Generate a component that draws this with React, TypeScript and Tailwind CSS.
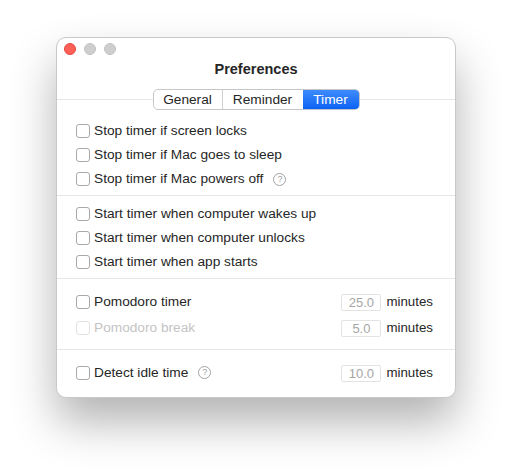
import React from "react";

const font = { fontFamily: '"Liberation Sans", Arial, sans-serif' };

const Check = ({ label, disabled }: { label: string; disabled?: boolean }) => (
  <div className="flex items-center gap-[4px]">
    <span
      className={`w-[14px] h-[14px] rounded-[3px] border bg-white ${
        disabled ? "border-[#e2e2e2]" : "border-[#a9a9a9]"
      }`}
    />
    <span className={disabled ? "text-[#c4c4c4]" : "text-[#262626]"}>{label}</span>
  </div>
);

const Help = () => (
  <span className="ml-[10px] w-[13px] h-[13px] rounded-full border border-[#a3a3a3] text-[#9d9d9d] text-[9px] leading-none flex items-center justify-center">
    ?
  </span>
);

const Minutes = ({ value }: { value: string }) => (
  <div className="flex items-center gap-[5px]">
    <span className="w-[40px] h-[17px] border border-[#e3e3e3] rounded-[2px] text-[#a6a6a6] text-[13px] flex items-center justify-center leading-none">
      {value}
    </span>
    <span className="text-[#262626] text-[13.3px]">minutes</span>
  </div>
);

export default function App() {
  return (
    <div className="w-[512px] h-[472px] bg-white pt-[37px] pl-[56px] text-[13.7px]" style={font}>
      <div className="w-[400px] h-[361px] bg-white rounded-[10px] border border-[#c9c9c9] shadow-[0_24px_45px_rgba(0,0,0,0.3)] flex flex-col overflow-hidden">
        <div className="h-[51px] flex flex-col">
          <div className="flex gap-[8px] pl-[7px] pt-[5px]">
            <span className="w-[12px] h-[12px] rounded-full bg-[#fe5f57] border border-[#e2463f]" />
            <span className="w-[12px] h-[12px] rounded-full bg-[#cecece] border border-[#c2c2c2]" />
            <span className="w-[12px] h-[12px] rounded-full bg-[#cecece] border border-[#c2c2c2]" />
          </div>
          <div className="text-center font-bold text-[14.5px] text-[#262626] mt-[6px] leading-[16px]">Preferences</div>
        </div>

        <div className="flex items-center h-[21px]">
          <div className="flex-1 h-px bg-[#e6e6e6]" />
          <div className="flex h-[21px] rounded-[5px] border border-[#c6c6c6] overflow-hidden leading-none">
            <span className="w-[69px] flex items-center justify-center text-[#262626] border-r border-[#d0d0d0]">General</span>
            <span className="w-[80px] flex items-center justify-center text-[#262626]">Reminder</span>
            <span className="w-[56px] flex items-center justify-center text-white bg-gradient-to-b from-[#3d8bfd] to-[#0a62f3]">Timer</span>
          </div>
          <div className="flex-1 h-px bg-[#e6e6e6]" />
        </div>

        <div className="pt-[9px] pb-[4px] pl-[19px] border-b border-[#e6e6e6]">
          <div className="h-[24px] flex items-center"><Check label="Stop timer if screen locks" /></div>
          <div className="h-[24px] flex items-center"><Check label="Stop timer if Mac goes to sleep" /></div>
          <div className="h-[24px] flex items-center"><Check label="Stop timer if Mac powers off" /><Help /></div>
        </div>

        <div className="pt-[6px] pb-[4px] pl-[19px] border-b border-[#e6e6e6]">
          <div className="h-[24px] flex items-center"><Check label="Start timer when computer wakes up" /></div>
          <div className="h-[24px] flex items-center"><Check label="Start timer when computer unlocks" /></div>
          <div className="h-[24px] flex items-center"><Check label="Start timer when app starts" /></div>
        </div>

        <div className="pt-[10px] pb-[8px] pl-[19px] pr-[22px] border-b border-[#e6e6e6]">
          <div className="h-[26px] flex items-center justify-between">
            <Check label="Pomodoro timer" />
            <Minutes value="25.0" />
          </div>
          <div className="h-[26px] flex items-center justify-between">
            <Check label="Pomodoro break" disabled />
            <Minutes value="5.0" />
          </div>
        </div>

        <div className="pt-[11px] pl-[19px] pr-[22px]">
          <div className="h-[24px] flex items-center justify-between">
            <div className="flex items-center">
              <Check label="Detect idle time" />
              <Help />
            </div>
            <Minutes value="10.0" />
          </div>
        </div>
      </div>
    </div>
  );
}
